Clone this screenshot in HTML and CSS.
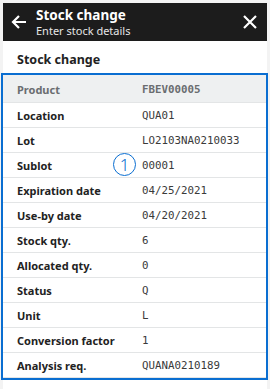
FILE: index.html
```html
<!DOCTYPE html>
<html lang="en">
<head>
    <meta charset="UTF-8">
    <meta name="viewport" content="width=device-width, initial-scale=1.0">
    <title>Stock change</title>
    <link rel="stylesheet" href="styles.css">
</head>
<body>

<div class="screen">
    <!-- top bar -->
    <div class="app-bar">
        <svg class="icon" width="18" height="18" viewBox="0 0 18 18">
            <path d="M16 9H3M9 3L3 9l6 6" fill="none" stroke="#fff" stroke-width="2.2"/>
        </svg>
        <div class="app-title">
            <div class="title">Stock change</div>
            <div class="subtitle">Enter stock details</div>
        </div>
        <svg class="icon close" width="16" height="16" viewBox="0 0 16 16">
            <path d="M2 2l12 12M14 2L2 14" fill="none" stroke="#fff" stroke-width="2.2"/>
        </svg>
    </div>

    <div class="section-title">Stock change</div>

    <!-- details -->
    <div class="details">
        <div class="row head"><span class="label">Product</span><span class="value">FBEV00005</span></div>
        <div class="row"><span class="label">Location</span><span class="value">QUA01</span></div>
        <div class="row"><span class="label">Lot</span><span class="value">LO2103NA0210033</span></div>
        <div class="row"><span class="label">Sublot</span><span class="value">00001</span><span class="marker">1</span></div>
        <div class="row"><span class="label">Expiration date</span><span class="value">04/25/2021</span></div>
        <div class="row"><span class="label">Use-by date</span><span class="value">04/20/2021</span></div>
        <div class="row"><span class="label">Stock qty.</span><span class="value">6</span></div>
        <div class="row"><span class="label">Allocated qty.</span><span class="value">0</span></div>
        <div class="row"><span class="label">Status</span><span class="value">Q</span></div>
        <div class="row"><span class="label">Unit</span><span class="value">L</span></div>
        <div class="row"><span class="label">Conversion factor</span><span class="value">1</span></div>
        <div class="row"><span class="label">Analysis req.</span><span class="value">QUANA0210189</span></div>
    </div>
</div>

</body>
</html>
```

FILE: styles.css
```css
body {
    margin: 0;
    background-color: #f3f3f3;
    font-family: "Noto Sans", Arial, sans-serif;
    color: #222;
}
.screen {
    margin: 3px 3px 0 3px;
    background-color: white;
    height: 386px;
}
.app-bar {
    background-color: #1c1c1c;
    color: white;
    height: 38px;
    display: flex;
    align-items: center;
    padding: 0 9px 0 7px;
}
.icon {
    flex: none;
}
.app-title {
    flex: 1;
    margin-left: 8px;
}
.title {
    font-size: 13.5px;
    font-weight: bold;
    line-height: 17px;
}
.subtitle {
    font-size: 11px;
    line-height: 13px;
    color: #e6e6e6;
}
.section-title {
    font-size: 12.5px;
    font-weight: bold;
    padding: 0 14px;
    height: 32px;
    line-height: 38px;
}
.details {
    border: 2px solid #0a6ed1;
    margin: 0 -1px 0 -2px;
    position: relative;
}
.row {
    display: grid;
    grid-template-columns: 125px 1fr;
    align-items: center;
    height: 24px;
    padding-left: 14px;
    border-bottom: 1px solid #e3e5e6;
    position: relative;
}
.row.head {
    background-color: #eef0f1;
    padding-top: 1px;
    box-sizing: border-box;
    height: 28px;
}
.label {
    font-size: 11px;
    font-weight: bold;
}
.value {
    font-family: "DejaVu Sans Mono", monospace;
    font-size: 10.8px;
    color: #3a3a3a;
}
.row.head .label,
.row.head .value {
    color: #6a6d70;
    font-weight: bold;
}
.marker {
    position: absolute;
    left: 110px;
    top: 0;
    width: 21px;
    height: 21px;
    border: 1.3px solid #0a6ed1;
    border-radius: 50%;
    color: #0a6ed1;
    font-size: 17px;
    font-weight: 300;
    line-height: 21px;
    text-align: center;
}
```
